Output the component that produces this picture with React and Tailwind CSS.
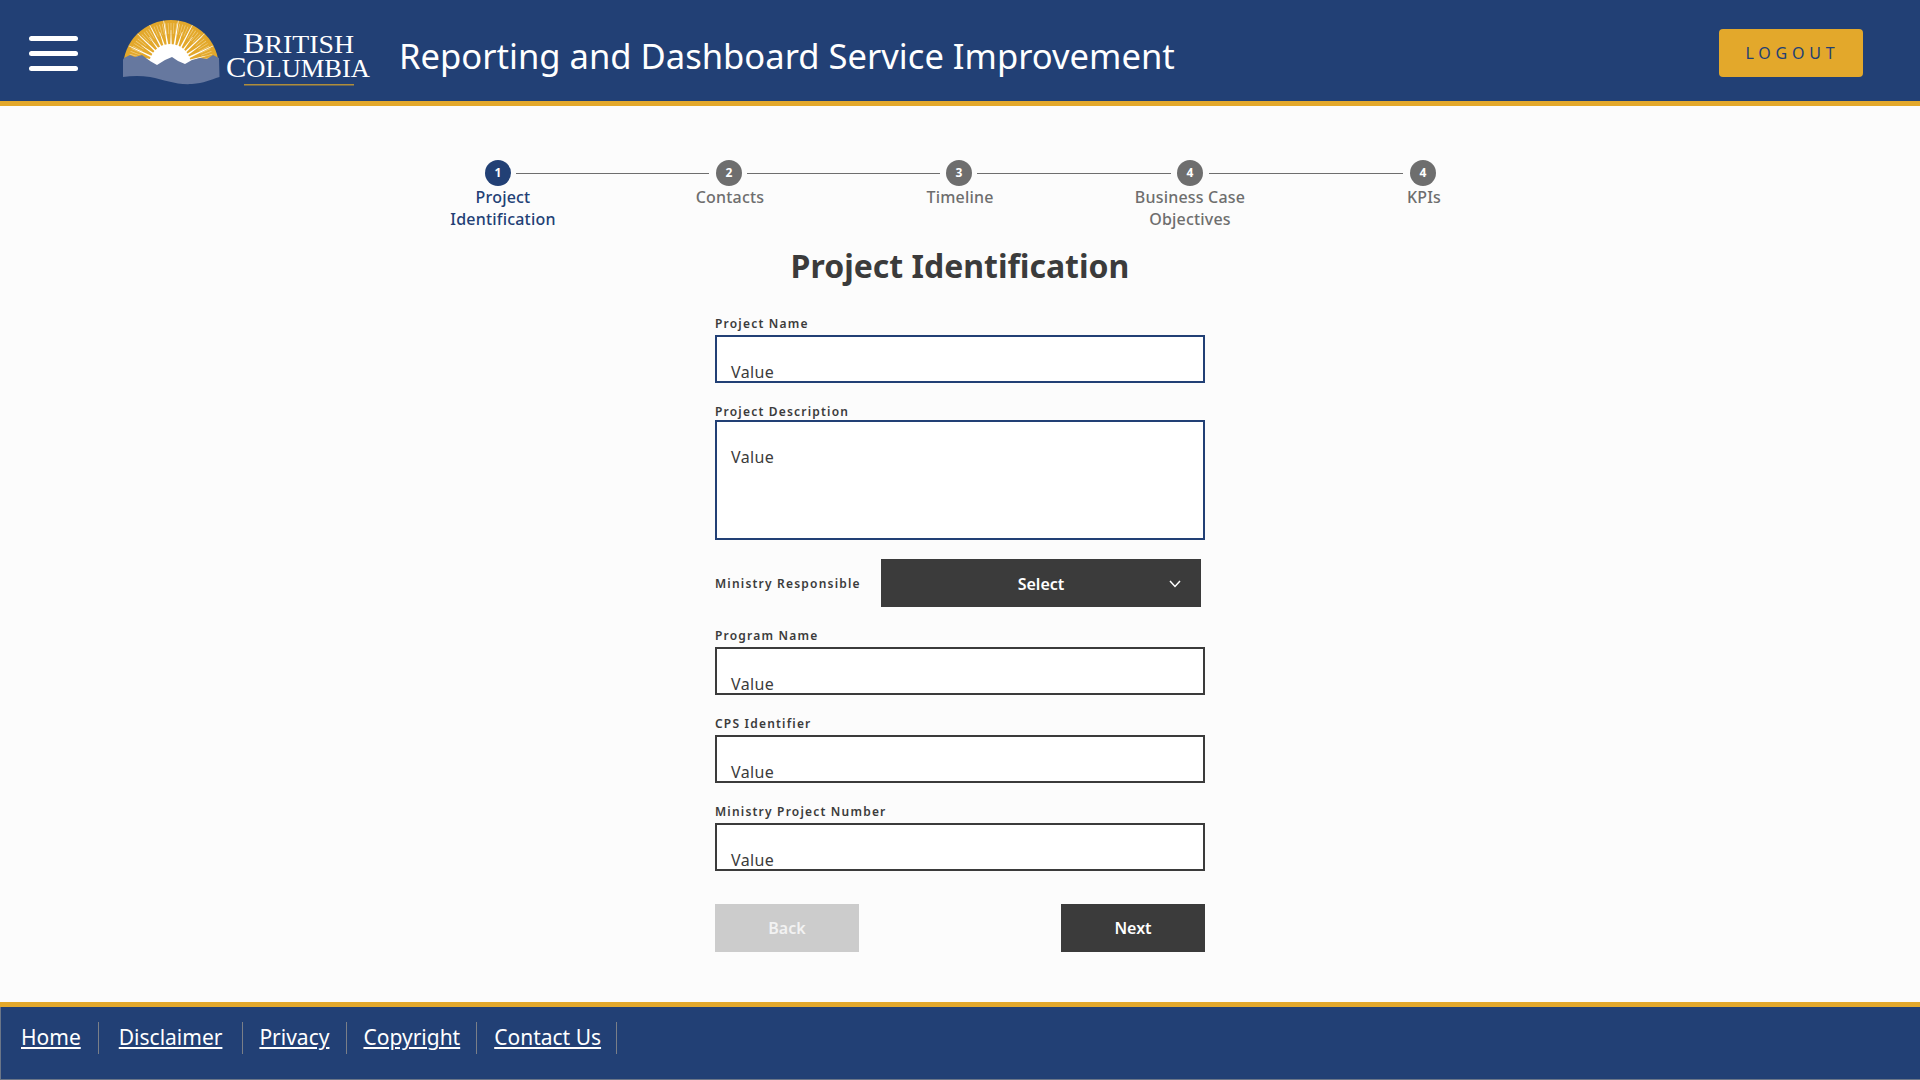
const rays = Array.from({ length: 19 }, (_, i) => -90 + (i - 9) * 9.2);
const fine = Array.from({ length: 45 }, (_, i) => -90 + (i - 22) * 3.9);

function point(angle, r) {
  const a = (angle * Math.PI) / 180;
  return `${(171 + Math.cos(a) * r).toFixed(2)},${(66 + Math.sin(a) * r).toFixed(2)}`;
}

function Logo() {
  return (
    <svg width="255" height="74" viewBox="120 16 255 74" className="shrink-0">
      <defs>
        <clipPath id="dome">
          <path d="M123 68A48 48 0 0 1 219 68Z" />
        </clipPath>
      </defs>
      <g clipPath="url(#dome)">
        <rect x="120" y="16" width="104" height="70" fill="#e3a82b" />
        {fine.map((a) => (
          <polygon key={a} points={`${point(a - 0.5, 32)} ${point(a + 0.5, 32)} ${point(a + 0.5, 43)} ${point(a - 0.5, 43)}`} fill="#f7dfa8" opacity="0.7" />
        ))}
        {rays.map((a, i) => (
          <polygon key={a} points={`${point(a - 3.4, 16)} ${point(a + 3.4, 16)} ${point(a + 0.3, i % 2 ? 36 : 47)} ${point(a - 0.3, i % 2 ? 36 : 47)}`} fill="#ffffff" />
        ))}
        <circle cx="170" cy="65" r="21" fill="#ffffff" />
      </g>
      <path d="M123 60L124 58L130 55L135 57L142 55L150 61L157 65L165 60L172 57L178 61L185 64L192 60L200 58L207 59L213 55L219 58L219.5 77C210 80 204 83 192 84C176 85 165 80 150 77C140 75.500 131 76 123 77Z" fill="#66789f" />
      <text x="243" y="53" fill="#ffffff" fontFamily="'Liberation Serif', serif" fontSize="30" textLength="111" lengthAdjust="spacingAndGlyphs">B<tspan fontSize="26">RITISH</tspan></text>
      <text x="226" y="77" fill="#ffffff" fontFamily="'Liberation Serif', serif" fontSize="30" textLength="144" lengthAdjust="spacingAndGlyphs">C<tspan fontSize="26">OLUMBIA</tspan></text>
      <rect x="244" y="84" width="110" height="1.500" fill="#b08d3a" />
    </svg>
  );
}

function Circle({ n, active }) {
  return (
    <div className={`flex h-[26px] w-[26px] shrink-0 items-center justify-center rounded-full text-xs font-bold text-white ${active ? "bg-[#224075]" : "bg-[#6e6e6e]"}`}>
      {n}
    </div>
  );
}

function Line({ className }) {
  return <div className={`h-px shrink-0 bg-[#6e6e6e] ${className}`} />;
}

function Field({ label, blue, tall }) {
  return (
    <div className="flex flex-col">
      <div className={`text-xs font-semibold tracking-[1.2px] text-[#3b3b3b] ${tall ? "h-[16px] leading-[16px]" : "h-[20px] leading-[18px]"}`}>{label}</div>
      <div className={`flex w-[490px] border-2 bg-white pl-[14px] tracking-[0.4px] text-[#3b3b3b] ${blue ? "border-[#224075]" : "border-[#3b3b3b]"} ${tall ? "h-[120px] items-start pt-[24px] text-base leading-[22px]" : "h-[48px] items-end overflow-hidden text-base leading-[18px]"}`}>
        Value
      </div>
    </div>
  );
}

function FooterLink({ children, className }) {
  return (
    <div className={`flex h-[32px] items-center border-r border-[#7a7f88] ${className}`}>
      <a href="#" className="text-[21px] text-white underline underline-offset-2">{children}</a>
    </div>
  );
}

export default function App() {
  return (
    <div className="flex h-[1080px] w-full flex-col overflow-hidden bg-[#fcfcfc] font-['Noto_Sans',sans-serif]">
      <header className="flex h-[106px] shrink-0 items-center border-b-[5px] border-[#e3a82b] bg-[#224075] pt-[5px] pr-[57px] pl-[29px]">
        <div className="flex w-[49px] flex-col gap-[10px]">
          <div className="h-[5px] rounded-full bg-white" />
          <div className="h-[5px] rounded-full bg-white" />
          <div className="h-[5px] rounded-full bg-white" />
        </div>
        <div className="ml-[42px]"><Logo /></div>
        <h1 className="mt-[5px] ml-[24px] flex-1 text-[34.6px] leading-[44px] font-normal text-white">Reporting and Dashboard Service Improvement</h1>
        <button className="flex h-[48px] w-[144px] items-center justify-center rounded-[4px] bg-[#e3a82b] pl-[3px] text-base tracking-[4.800px] text-[#224075]">LOGOUT</button>
      </header>

      <main className="flex flex-1 flex-col items-center pt-[54px]">
        <div className="ml-[485px] flex items-center self-start">
          <Circle n="1" active />
          <Line className="mr-[7px] ml-[5px] w-[193px]" />
          <Circle n="2" />
          <Line className="mr-[6px] ml-[5px] w-[193px]" />
          <Circle n="3" />
          <Line className="mr-[6px] ml-[5px] w-[194px]" />
          <Circle n="4" />
          <Line className="mr-[7px] ml-[6px] w-[194px]" />
          <Circle n="4" />
        </div>
        <div className="ml-[450px] flex w-[1030px] self-start text-center text-base leading-[22px] font-medium tracking-[0.2px] text-[#6e6e6e]">
          <div className="w-[106px] text-[#224075]">Project Identification</div>
          <div className="ml-[119px] w-[110px]">Contacts</div>
          <div className="ml-[120px] w-[110px]">Timeline</div>
          <div className="ml-[110px] w-[130px]">Business Case Objectives</div>
          <div className="ml-[114px] w-[110px]">KPIs</div>
        </div>

        <h2 className="mt-[14px] text-[32px] leading-[44px] font-bold text-[#3b3b3b]">Project Identification</h2>

        <div className="mt-[27px] flex w-[490px] flex-col">
          <Field label="Project Name" blue />
          <div className="mt-[21px]"><Field label="Project Description" blue tall /></div>
          <div className="mt-[19px] flex h-[48px] items-center justify-between pr-[4px]">
            <span className="pt-[1px] text-xs font-semibold tracking-[1.2px] text-[#3b3b3b]">Ministry Responsible</span>
            <div className="relative flex h-[48px] w-[320px] items-center justify-center bg-[#3b3b3b] pt-[1px] text-base font-semibold text-white">
              Select
              <svg className="absolute right-[20px]" width="12" height="8" viewBox="0 0 12 8" fill="none" stroke="#ffffff" strokeWidth="1.500"><path d="M1 1L6 6.500L11 1" /></svg>
            </div>
          </div>
          <div className="mt-[20px]"><Field label="Program Name" /></div>
          <div className="mt-[20px]"><Field label="CPS Identifier" /></div>
          <div className="mt-[20px]"><Field label="Ministry Project Number" /></div>
          <div className="mt-[33px] flex justify-between">
            <button className="h-[48px] w-[144px] bg-[#cccccc] text-base font-semibold text-[#f2f2f2]">Back</button>
            <button className="h-[48px] w-[144px] bg-[#3b3b3b] text-base font-semibold text-white">Next</button>
          </div>
        </div>
      </main>

      <footer className="flex h-[78px] shrink-0 items-start border-t-[5px] border-[#e3a82b] bg-[#224075] pt-[15px] shadow-[inset_1px_-1px_0_#6b7688]">
        <FooterLink className="ml-[21px] pr-[17px]">Home</FooterLink>
        <FooterLink className="pr-[20px] pl-[20px]">Disclaimer</FooterLink>
        <FooterLink className="pr-[17px] pl-[16px]">Privacy</FooterLink>
        <FooterLink className="pr-[16px] pl-[16px]">Copyright</FooterLink>
        <FooterLink className="pr-[15px] pl-[17px]">Contact Us</FooterLink>
      </footer>
    </div>
  );
}
